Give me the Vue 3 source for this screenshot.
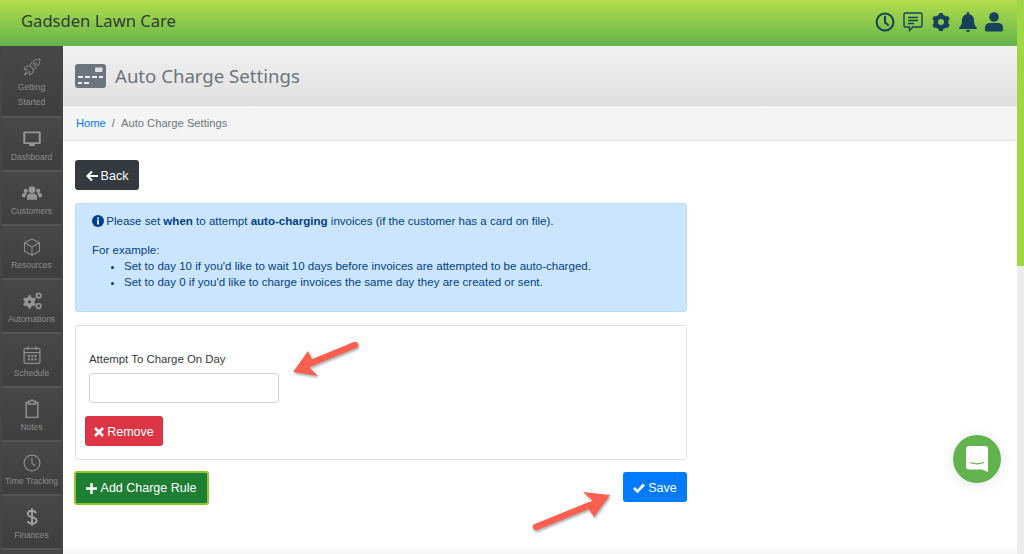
<template>
  <div class="page">
    <header class="topbar">
      <div class="brand">Gadsden Lawn Care</div>
      <div class="top-icons">
        <svg width="20" height="20" viewBox="0 0 20 20" fill="none" stroke="#17425a" stroke-width="2"><circle cx="10" cy="10" r="8.4" /><path d="M10 4.5V10.5L13 13" stroke-linecap="round" /></svg>
        <svg width="20" height="20" viewBox="0 0 20 20" fill="none" stroke="#17425a" stroke-width="1.4"><path d="M2.5 1h15A1.500 1.500 0 0 1 19 2.500v11a1.500 1.500 0 0 1-1.500 1.500H10l-3.500 3.500V15h-4A1.500 1.500 0 0 1 1 13.500v-11A1.500 1.500 0 0 1 2.500 1z" /><path d="M5 5.500h10M5 8.500h10M5 11.500h6" stroke-width="1.500" /></svg>
        <svg width="20" height="20" viewBox="0 0 20 20"><circle cx="10" cy="10" r="5.600" fill="none" stroke="#17425a" stroke-width="4" /><path d="M10 10 10 1M10 10 10 19M10 10 2.200 5.500M10 10 17.800 14.500M10 10 2.200 14.500M10 10 17.800 5.500" stroke="#17425a" stroke-width="4" /><circle cx="10" cy="10" r="3" fill="#8cc748" /></svg>
        <svg width="18" height="20" viewBox="0 0 18 20" fill="#17425a"><path d="M9 0a1.300 1.300 0 0 1 1.300 1.300v.9C13.300 2.800 15 5.200 15 8c0 4.500 1.200 5.800 2.600 7.300.6.600.2 1.700-.7 1.700H1.100c-.9 0-1.300-1.100-.7-1.700C1.800 13.800 3 12.500 3 8c0-2.800 1.700-5.200 4.700-5.800v-.9A1.300 1.300 0 0 1 9 0z" /><path d="M7 18h4a2 2 0 0 1-4 0z" /></svg>
        <svg width="18" height="20" viewBox="0 0 18 20" fill="#17425a"><circle cx="9" cy="5" r="4.800" /><path d="M0 18v-2.500C0 12.500 2.500 11 5 11h8c2.500 0 5 1.500 5 4.500V18a1.500 1.500 0 0 1-1.500 1.500h-15A1.500 1.500 0 0 1 0 18z" /></svg>
      </div>
    </header>

    <div class="body">
      <nav class="sidebar">
        <a v-for="item in navItems" :key="item.label" class="nav-item" :class="{ tall: item.tall }">
          <svg class="nav-icon" viewBox="0 0 24 24" v-html="item.icon"></svg>
          <span class="nav-label">{{ item.label }}</span>
        </a>
      </nav>

      <main class="content">
        <div class="page-title">
          <svg width="31" height="24" viewBox="0 0 31 24"><rect width="31" height="24" rx="3" fill="#6c757d" /><rect x="20" y="3.500" width="7.500" height="4.500" rx="1" fill="#dfe1e3" /><path d="M3 12h5v2H3zM10 12h5v2h-5zM17 12h5v2h-5zM24 12h4v2h-4zM3 18h4v2H3zM9 18h5v2H9z" fill="#eceeef" /></svg>
          <h1>Auto Charge Settings</h1>
        </div>
        <div class="crumbs">
          <a class="home">Home</a>
          <span class="sep">/</span>
          <span>Auto Charge Settings</span>
        </div>

        <section class="panel">
          <button class="btn back">
            <svg width="12" height="12" viewBox="0 0 12 12" fill="none" stroke="#fff" stroke-width="2.200"><path d="M6 1.500 1.500 6 6 10.500M2 6h10" /></svg>
            Back
          </button>

          <div class="alert">
            <p>
              <svg width="12" height="12" viewBox="0 0 12 12"><circle cx="6" cy="6" r="6" fill="#004085" /><rect x="5" y="5" width="2" height="4.500" fill="#cce5ff" /><rect x="5" y="2.500" width="2" height="1.800" fill="#cce5ff" /></svg>
              Please set <b>when</b> to attempt <b>auto-charging</b> invoices (if the customer has a card on file).
            </p>
            <p class="example">For example:</p>
            <ul>
              <li>Set to day 10 if you'd like to wait 10 days before invoices are attempted to be auto-charged.</li>
              <li>Set to day 0 if you'd like to charge invoices the same day they are created or sent.</li>
            </ul>
          </div>

          <div class="rule-card">
            <label for="day">Attempt To Charge On Day</label>
            <input id="day" type="text" />
            <button class="btn remove">
              <svg width="10" height="10" viewBox="0 0 10 10" stroke="#fff" stroke-width="2.600"><path d="M1 1 9 9M9 1 1 9" /></svg>
              Remove
            </button>
          </div>

          <div class="actions">
            <button class="btn add">
              <svg width="11" height="11" viewBox="0 0 11 11" stroke="#fff" stroke-width="2.400"><path d="M5.500 0v11M0 5.500h11" /></svg>
              Add Charge Rule
            </button>
            <button class="btn save">
              <svg width="12" height="10" viewBox="0 0 12 10" fill="none" stroke="#fff" stroke-width="2.600"><path d="M1 5 4.500 8.500 11 1.500" /></svg>
              Save
            </button>
          </div>
        </section>

        <svg class="arrow arrow-one" width="72" height="44" viewBox="0 0 72 44"><path d="M64 5 20 23" stroke="#fa5f50" stroke-width="6.500" stroke-linecap="round" /><path d="M2 32 17 11 22 21 19 28 27 36z" fill="#fa5f50" /></svg>
        <svg class="arrow arrow-two" width="82" height="44" viewBox="0 0 82 44"><path d="M6 39 60 17" stroke="#fa5f50" stroke-width="6.500" stroke-linecap="round" /><path d="M80 7 53 4 62 12 58 20 64 29z" fill="#fa5f50" /></svg>

        <div class="chat">
          <svg width="22" height="26" viewBox="0 0 22 26"><path d="M3 0h16a3 3 0 0 1 3 3v23l-6-2.500H3a3 3 0 0 1-3-3V3a3 3 0 0 1 3-3z" fill="#fff" /><path d="M4.500 16.500c3.500 1.800 9.500 1.800 13 0" fill="none" stroke="#62b34d" stroke-width="1.100" stroke-linecap="round" /></svg>
        </div>
      </main>
    </div>
    <div class="edge"></div>
    <div class="edge-low"></div>
    <div class="bottom-fade"></div>
  </div>
</template>

<script setup>
const navItems = [
  { label: 'Getting Started', tall: true, icon: '<path d="M21.500 2.500c-5.500 0-9.500 2.500-12 8l4 4c5.500-2.500 8-6.500 8-12zM9.500 10.500 5 11l-2.500 4 4.500.5M13.500 14.500 13 19l-4 2.500-.5-4.500M6 17l-3.500 4.500L3 22l4.500-3.500" fill="none" stroke="#8d8d8d" stroke-width="1.200" stroke-linejoin="round"/><circle cx="15.500" cy="8.500" r="1.700" fill="none" stroke="#8d8d8d" stroke-width="1.100"/>' },
  { label: 'Dashboard', icon: '<path d="M3 3h18a1.500 1.500 0 0 1 1.500 1.500v12a1.500 1.500 0 0 1-1.500 1.500H3a1.500 1.500 0 0 1-1.500-1.500v-12A1.500 1.500 0 0 1 3 3zM4 5v11h16V5zM9 18h6l1 2.500H8z" fill="#959595" fill-rule="evenodd"/>' },
  { label: 'Customers', icon: '<circle cx="12" cy="8" r="4" fill="#959595"/><circle cx="4.500" cy="9.500" r="2.500" fill="#959595"/><circle cx="19.500" cy="9.500" r="2.500" fill="#959595"/><path d="M6 20v-3c0-3 2-4.500 4-4.500h4c2 0 4 1.500 4 4.500v3zM0 17v-2c0-2 1-3 3-3h2l1 1c-1 1-2 2-2 4zM24 17v-2c0-2-1-3-3-3h-2l-1 1c1 1 2 2 2 4z" fill="#959595"/>' },
  { label: 'Resources', icon: '<path d="M12 2.500 21 7v10l-9 5-9-5V7zM3 7l9 5 9-5M12 12v10" fill="none" stroke="#8d8d8d" stroke-width="1.300" stroke-linejoin="round"/>' },
  { label: 'Automations', icon: '<circle cx="9" cy="13" r="4.500" fill="none" stroke="#959595" stroke-width="3.500"/><path d="M9 13V5M9 13V21M9 13 2 9M9 13 16 17M9 13 2 17M9 13 16 9" stroke="#959595" stroke-width="3"/><circle cx="9" cy="13" r="2" fill="#444"/><circle cx="20" cy="5.500" r="2.700" fill="none" stroke="#959595" stroke-width="2"/><circle cx="20" cy="18" r="2.700" fill="none" stroke="#959595" stroke-width="2"/>' },
  { label: 'Schedule', icon: '<path d="M4 4h16a1.500 1.500 0 0 1 1.500 1.500v15A1.500 1.500 0 0 1 20 22H4a1.500 1.500 0 0 1-1.500-1.500v-15A1.500 1.500 0 0 1 4 4zM3 9h18M7 2v4M17 2v4" fill="none" stroke="#8d8d8d" stroke-width="1.500"/><path d="M7 12h2.500v2.500H7zM11 12h2.500v2.500H11zM15 12h2.500v2.500H15zM7 16h2.500v2.500H7zM11 16h2.500v2.500H11zM15 16h2.500v2.500H15z" fill="#8d8d8d"/>' },
  { label: 'Notes', icon: '<path d="M8 4H5v18h14V4h-3M8 2.500h2.500a1.500 1.500 0 0 1 3 0H16V6H8z" fill="none" stroke="#959595" stroke-width="1.700"/>' },
  { label: 'Time Tracking', icon: '<circle cx="12" cy="12" r="9.500" fill="none" stroke="#8d8d8d" stroke-width="1.400"/><path d="M12 6v6.500l3.500 2.500" fill="none" stroke="#8d8d8d" stroke-width="1.400" stroke-linecap="round"/>' },
  { label: 'Finances', icon: '<path d="M17 7.500C16 5.500 14 4.500 12 4.500c-3 0-5 1.500-5 3.800 0 5.200 10.500 2.800 10.500 8 0 2.300-2.500 3.700-5.500 3.700-2.500 0-4.500-1-5.500-3M12 1.500v21" fill="none" stroke="#a0a0a0" stroke-width="2.300"/>' },
]
</script>

<style scoped>
.page {
  position: relative;
  width: 1024px;
  height: 554px;
  overflow: hidden;
  background: #fff;
  font-family: "Liberation Sans", sans-serif;
}
.topbar {
  height: 46px;
  display: flex;
  align-items: center;
  justify-content: space-between;
  padding: 0 21px 4px 21px;
  box-sizing: border-box;
  background: linear-gradient(#b3dc4c, #63b44b);
}
.brand {
  font-family: "Noto Sans", sans-serif;
  font-size: 16.600px;
  color: #2f3d35;
  margin-top: -1px;
}
.top-icons {
  display: flex;
  align-items: center;
  gap: 8px;
  margin-top: 2px;
}
.body {
  display: flex;
  height: 508px;
}
.sidebar {
  width: 63px;
  flex: none;
  background: #464646;
  box-sizing: border-box;
  padding: 1px 2px 0;
  overflow: hidden;
}
.nav-item {
  height: 54px;
  box-sizing: border-box;
  display: flex;
  flex-direction: column;
  align-items: center;
  border-bottom: 2px solid #555;
  padding-top: 11px;
  background: linear-gradient(#484848, #3e3e3e);
}
.nav-item.tall {
  height: 71px;
  padding-top: 10px;
}
.nav-icon {
  width: 20px;
  height: 20px;
  flex: none;
}
.nav-label {
  font-size: 8.500px;
  line-height: 15.500px;
  color: #8c8c8c;
  text-align: center;
  margin-top: 1px;
  white-space: nowrap;
}
.tall .nav-label {
  white-space: normal;
  width: 40px;
  line-height: 15px;
  margin-top: 3px;
}
.content {
  flex: 1;
  position: relative;
  min-width: 0;
}
.page-title {
  height: 59px;
  display: flex;
  align-items: center;
  gap: 9px;
  padding-left: 12px;
  background: linear-gradient(#f1f1f1, #e0e0e0);
  border-bottom: 1px solid #dcdcdc;
}
.page-title h1 {
  margin: 0;
  font-family: "Noto Sans", sans-serif;
  font-weight: 400;
  font-size: 18.600px;
  color: #6c757d;
}
.crumbs {
  height: 34px;
  display: flex;
  align-items: center;
  gap: 6px;
  padding-left: 13px;
  font-size: 11.200px;
  color: #6c757d;
  background: #f4f4f4;
  border-bottom: 1px solid #e4e4e4;
}
.home {
  color: #007bff;
}
.panel {
  width: 612px;
  margin-left: 12px;
  padding-top: 19px;
}
.btn {
  display: inline-flex;
  align-items: center;
  justify-content: center;
  gap: 3px;
  height: 30px;
  border: none;
  border-radius: 3px;
  color: #fff;
  font-family: "Liberation Sans", sans-serif;
  font-size: 12.500px;
  padding: 1px 0 0;
}
.back {
  width: 64px;
  background: #343a40;
}
.alert {
  margin-top: 13px;
  height: 109px;
  box-sizing: border-box;
  padding: 9px 16px;
  background: #cce5ff;
  border: 1px solid #b8daff;
  border-radius: 3px;
  color: #004085;
  font-size: 11.550px;
  line-height: 16px;
}
.alert p {
  margin: 0;
}
.alert svg {
  vertical-align: -1.500px;
  margin-right: -1px;
}
.alert .example {
  margin-top: 13px;
}
.alert ul {
  margin: 0;
  padding-left: 32px;
}
.rule-card {
  margin-top: 13px;
  height: 135px;
  box-sizing: border-box;
  border: 1px solid #dfe2e4;
  border-radius: 3px;
  padding: 26px 9px 0;
}
.rule-card label {
  display: block;
  margin-left: 4px;
  font-size: 11.400px;
  line-height: 14px;
  color: #343a40;
}
.rule-card input {
  display: block;
  width: 190px;
  height: 30px;
  box-sizing: border-box;
  margin: 7px 0 0 4px;
  border: 1px solid #ced4da;
  border-radius: 3px;
  background: #fff;
}
.remove {
  width: 78px;
  margin-top: 13px;
  background: #dc3545;
}
.actions {
  display: flex;
  justify-content: space-between;
  align-items: flex-start;
  margin-top: 11px;
}
.add {
  width: 135px;
  height: 34px;
  margin: 0 0 0 -1px;
  gap: 4px;
  padding: 0 1px 0 0;
  background: #1e7e34;
  border: 2px solid #8cc732;
  box-sizing: border-box;
}
.save {
  width: 64px;
  margin-top: 1px;
  background: #007bff;
}
.arrow {
  position: absolute;
  filter: drop-shadow(1px 2px 1px rgba(0, 0, 0, .3));
}
.arrow-one {
  left: 228px;
  top: 294px;
}
.arrow-two {
  left: 467px;
  top: 442px;
}
.chat {
  position: absolute;
  left: 890px;
  top: 389px;
  width: 48px;
  height: 48px;
  border-radius: 50%;
  background: #62b34d;
  display: flex;
  align-items: center;
  justify-content: center;
  box-shadow: 0 2px 14px rgba(0, 0, 0, .1);
}
.edge {
  position: absolute;
  right: 0;
  top: 0;
  width: 7px;
  height: 266px;
  background: #a0d548;
}
.edge-low {
  position: absolute;
  right: 0;
  top: 266px;
  bottom: 0;
  width: 7px;
  background: #ececec;
}
.bottom-fade {
  position: absolute;
  left: 63px;
  right: 7px;
  bottom: 0;
  height: 10px;
  background: linear-gradient(#fff, #f6f6f6);
}
</style>
